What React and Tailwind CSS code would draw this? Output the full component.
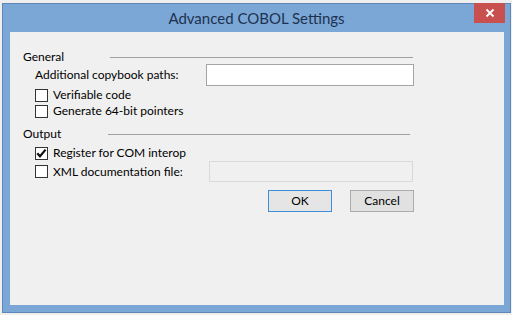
import React from "react";

function Check({ checked }) {
  return (
    <div className="w-[13px] h-[13px] border border-[#333333] bg-white flex items-center justify-center shrink-0">
      {checked && (
        <svg width="11" height="11" viewBox="0 0 11 11">
          <path d="M1.3 5.2 L4 8.3 L9.6 1.6" fill="none" stroke="#111111" strokeWidth="2.2" />
        </svg>
      )}
    </div>
  );
}

export default function App() {
  const font = { fontFamily: 'Lato, "Noto Sans", Arial, sans-serif' };
  return (
    <div className="w-[512px] h-[315px] bg-[#efefef] pl-[2px] pt-[3px]" style={font}>
      <div className="w-[509px] h-[310px] bg-[#7ba7d6] border border-[#5e86b6] flex flex-col">
        <div className="relative h-[28px] flex items-center justify-center shrink-0">
          <span className="text-[15px] text-[#1d3250] leading-none mt-[1px]">Advanced COBOL Settings</span>
          <div className="absolute right-[5px] top-[-1px] w-[31px] h-[20px] bg-[#c8514f] flex items-center justify-center">
            <svg width="10" height="10" viewBox="0 0 10 10">
              <path d="M1.5 1.5 L8.5 8.5 M8.5 1.5 L1.5 8.5" stroke="#ffffff" strokeWidth="1.8" />
            </svg>
          </div>
        </div>
        <div className="ml-[7px] mr-[6px] mb-[7px] flex-1 bg-[#f0f0f0] text-[12px] text-black flex flex-col pl-[13px] pt-[18px] leading-none">
          <div className="h-[14px] flex items-center">
            <span className="w-[87px]">General</span>
            <div className="w-[303px] h-0 border-t border-[#a0a0a0]" />
          </div>
          <div className="h-[22px] flex items-center pl-[12px]">
            <span className="w-[171px]">Additional copybook paths:</span>
            <div className="w-[208px] h-[22px] bg-white border border-[#a5a5a5]" />
          </div>
          <div className="h-[16px] mt-[1px] flex items-center pl-[12px] gap-[5px]">
            <Check />
            <span>Verifiable code</span>
          </div>
          <div className="h-[16px] flex items-center pl-[12px] gap-[5px]">
            <Check />
            <span>Generate 64-bit pointers</span>
          </div>
          <div className="h-[14px] mt-[8px] flex items-center">
            <span className="w-[85px]">Output</span>
            <div className="w-[302px] h-0 border-t border-[#a0a0a0]" />
          </div>
          <div className="h-[16px] mt-[4px] flex items-center pl-[12px] gap-[5px]">
            <Check checked />
            <span>Register for COM interop</span>
          </div>
          <div className="h-[21px] flex items-center pl-[12px]">
            <div className="w-[174px] flex items-center gap-[5px]">
              <Check />
              <span>XML documentation file:</span>
            </div>
            <div className="w-[204px] h-[21px] bg-[#f0f0f0] border border-[#d9d9d9]" />
          </div>
          <div className="h-[22px] mt-[8px] flex justify-end pr-[90px] gap-[18px]">
            <div className="w-[64px] h-[22px] border border-[#3c8fd8] bg-[#e5e5e5] flex items-center justify-center">OK</div>
            <div className="w-[64px] h-[22px] border border-[#acacac] bg-[#e1e1e1] flex items-center justify-center">Cancel</div>
          </div>
        </div>
      </div>
    </div>
  );
}
